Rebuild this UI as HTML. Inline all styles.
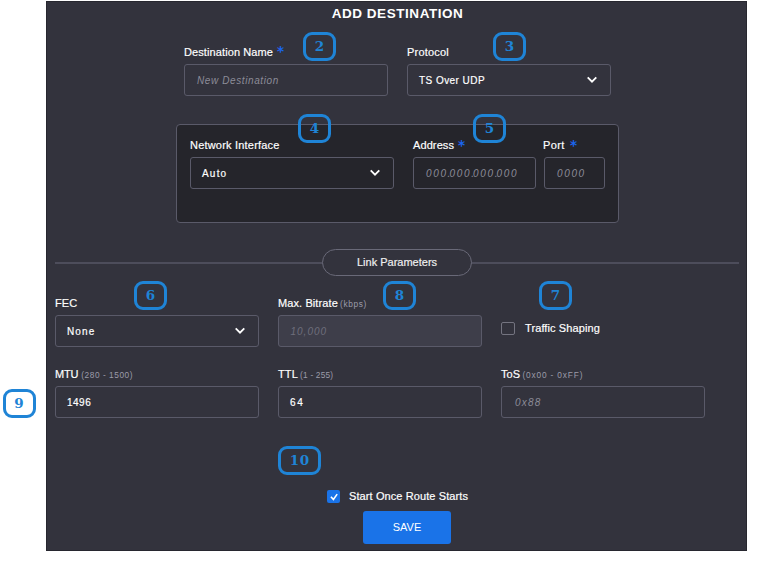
<!DOCTYPE html>
<html lang="en">
<head>
<meta charset="utf-8">
<title>Add Destination</title>
<style>
  html, body { margin: 0; padding: 0; background: #ffffff; }
  body { width: 766px; height: 571px; position: relative; overflow: hidden;
         font-family: "Liberation Sans", sans-serif; color: #ffffff; }
  .abs { position: absolute; }
  #panel { left: 46px; top: 1px; width: 701px; height: 550px; background: #33333d;
           box-shadow: inset 0 0 0 1px #27272f; }
  .title { margin: 0; left: 47px; width: 701px; top: 6px; text-align: center; font-weight: bold;
           font-size: 13.5px; line-height: 16px; letter-spacing: 0.55px; }
  .lbl { font-size: 11px; line-height: 14px; white-space: nowrap; color: #fff; letter-spacing: 0.1px; }
  .lbl small { font-size: 8.3px; color: #9c9caa; letter-spacing: 0.62px; }
  .star { font-family: "DejaVu Sans", "Liberation Sans", sans-serif; color: #1a66f0; font-weight: bold; font-size: 13.5px; line-height: 14px; }
  .fld { box-sizing: border-box; height: 32px; border: 1px solid #5a5a69; border-radius: 3px;
         font-size: 10px; line-height: 31px; padding-left: 11px; white-space: nowrap; color: #fff; letter-spacing: 0.6px; }
  .fld, .lbl, .pill { -webkit-text-stroke: 0.18px currentColor; }
  .lbl small, .ph { -webkit-text-stroke: 0; }
  .ph { font-style: italic; color: #8c8c98; }
  .dis { background: #3e3e4a; }
  .dis.ph { color: #6e6e7c; letter-spacing: 1.0px; padding-left: 11.5px; }
  .dark { background: #25252b; }
  .num { letter-spacing: 1.64px; }
  .num i { letter-spacing: -0.88px; }
  .chev { position: absolute; right: 13.2px; top: 11px; width: 10px; height: 8px; }
  #box { left: 176px; top: 124px; width: 443px; height: 99px; box-sizing: border-box;
         background: #25252b; border: 1px solid #5a5a69; border-radius: 4px; }
  .hr { left: 55px; top: 262px; width: 684px; height: 2px; background: #4d4d5b; }
  .pill { left: 322px; top: 249px; width: 150px; height: 27px; box-sizing: border-box;
          border: 1px solid #696978; border-radius: 14px; background: #33333d;
          text-align: center; font-size: 11px; line-height: 25px; color: #f0f0f0; }
  .cb { box-sizing: border-box; width: 13px; height: 13px; border-radius: 2px; }
  .cb.off { border: 1px solid #747480; width: 14px; }
  .cb.on { background: #1a73e8; }
  .btn { border: 0; padding: 0; margin: 0; font-family: inherit; letter-spacing: normal; cursor: pointer; left: 363px; top: 511px; width: 88px; height: 33px; background: #1a73e8; border-radius: 3px;
         text-align: center; font-size: 11px; line-height: 33px; color: #fff; }
  .tag { box-sizing: border-box; width: 33px; height: 29px; border: 3px solid #1f84d6; border-radius: 9px;
         font-family: "DejaVu Serif", "Liberation Serif", serif; font-weight: bold; font-size: 13.5px;
         line-height: 23.6px; text-align: center; color: #1f84d6; }
  .tag.w { background: #fff; }
</style>
</head>
<body>
<div id="panel" class="abs"></div>
<h1 class="abs title">ADD DESTINATION</h1>

<!-- row 0 -->
<label class="abs lbl" style="left:184px;top:45px;letter-spacing:0.1px;">Destination Name</label>
<div class="abs star" style="left:277px;top:44px;">*</div>
<div class="abs fld ph" style="left:184px;top:64px;width:204px;padding-left:12px;">New Destination</div>
<label class="abs lbl" style="left:407px;top:45px;letter-spacing:0.2px;">Protocol</label>
<div class="abs fld" style="left:407px;top:64px;width:204px;letter-spacing:0.45px;">TS Over UDP
  <svg class="chev" viewBox="0 0 10 8"><path d="M0.7 1.35 L5 5.75 L9.3 1.35" fill="none" stroke="#fff" stroke-width="1.8"/></svg></div>

<!-- dark box -->
<div id="box" class="abs"></div>
<label class="abs lbl" style="left:190px;top:138px;letter-spacing:0.2px;">Network Interface</label>
<div class="abs fld dark" style="left:190px;top:157px;width:204px;letter-spacing:1.2px;">Auto
  <svg class="chev" viewBox="0 0 10 8"><path d="M0.7 1.35 L5 5.75 L9.3 1.35" fill="none" stroke="#fff" stroke-width="1.8"/></svg></div>
<label class="abs lbl" style="left:413px;top:138px;">Address</label>
<div class="abs star" style="left:458px;top:138px;">*</div>
<div class="abs fld dark ph num" style="left:413px;top:157px;width:123px;padding-left:12px;">000<i>.</i>000<i>.</i>000<i>.</i>000</div>
<label class="abs lbl" style="left:543px;top:138px;letter-spacing:0.4px;">Port</label>
<div class="abs star" style="left:570px;top:138px;">*</div>
<div class="abs fld dark ph num" style="left:544px;top:157px;width:61px;padding-left:12px;">0000</div>

<!-- link parameters -->
<div class="abs hr"></div>
<div class="abs pill">Link Parameters</div>

<!-- row 1 -->
<label class="abs lbl" style="left:55px;top:296px;">FEC</label>
<div class="abs fld" style="left:55px;top:315px;width:204px;letter-spacing:1.1px;">None
  <svg class="chev" viewBox="0 0 10 8"><path d="M0.7 1.35 L5 5.75 L9.3 1.35" fill="none" stroke="#fff" stroke-width="1.8"/></svg></div>
<label class="abs lbl" style="left:278px;top:296px;">Max. Bitrate <small style="margin-left:-1px">(kbps)</small></label>
<div class="abs fld dis ph" style="left:278px;top:315px;width:204px;">10,000</div>
<div class="abs cb off" style="left:501px;top:322px;"></div>
<label class="abs lbl" style="left:525px;top:321px;">Traffic Shaping</label>

<!-- row 2 -->
<label class="abs lbl" style="left:55px;top:367px;"><span style="letter-spacing:-0.25px">MTU</span> <small style="letter-spacing:0.55px">(280 - 1500)</small></label>
<div class="abs fld" style="left:55px;top:386px;width:204px;letter-spacing:0.5px;">1496</div>
<label class="abs lbl" style="left:278px;top:367px;">TTL <small style="letter-spacing:0.2px;margin-left:-0.5px">(1 - 255)</small></label>
<div class="abs fld" style="left:278px;top:386px;width:204px;letter-spacing:1.8px;">64</div>
<label class="abs lbl" style="left:501px;top:367px;">ToS <small style="letter-spacing:0.85px;margin-left:-1px">(0x00 - 0xFF)</small></label>
<div class="abs fld ph" style="left:501px;top:386px;width:204px;padding-left:13px;letter-spacing:1.25px;">0x88</div>

<!-- footer -->
<div class="abs cb on" style="left:327px;top:490px;">
  <svg width="13" height="13" viewBox="0 0 13 13" style="display:block"><path d="M3.9 6.8 L6.4 9.4 L10.2 4.1" fill="none" stroke="#fff" stroke-width="1.6"/></svg></div>
<label class="abs lbl" style="left:349px;top:489px;">Start Once Route Starts</label>
<button type="button" class="abs btn">SAVE</button>

<!-- callout tags -->
<div class="abs tag" style="left:303px;top:32px;">2</div>
<div class="abs tag" style="left:493px;top:32px;">3</div>
<div class="abs tag" style="left:298px;top:114px;">4</div>
<div class="abs tag" style="left:473px;top:114px;">5</div>
<div class="abs tag" style="left:134px;top:281px;">6</div>
<div class="abs tag" style="left:539px;top:281px;">7</div>
<div class="abs tag" style="left:383px;top:281px;">8</div>
<div class="abs tag w" style="left:3px;top:389px;text-indent:-1px;">9</div>
<div class="abs tag" style="left:278px;top:446px;width:43px;letter-spacing:0.6px;text-indent:0.6px;">10</div>
</body>
</html>
